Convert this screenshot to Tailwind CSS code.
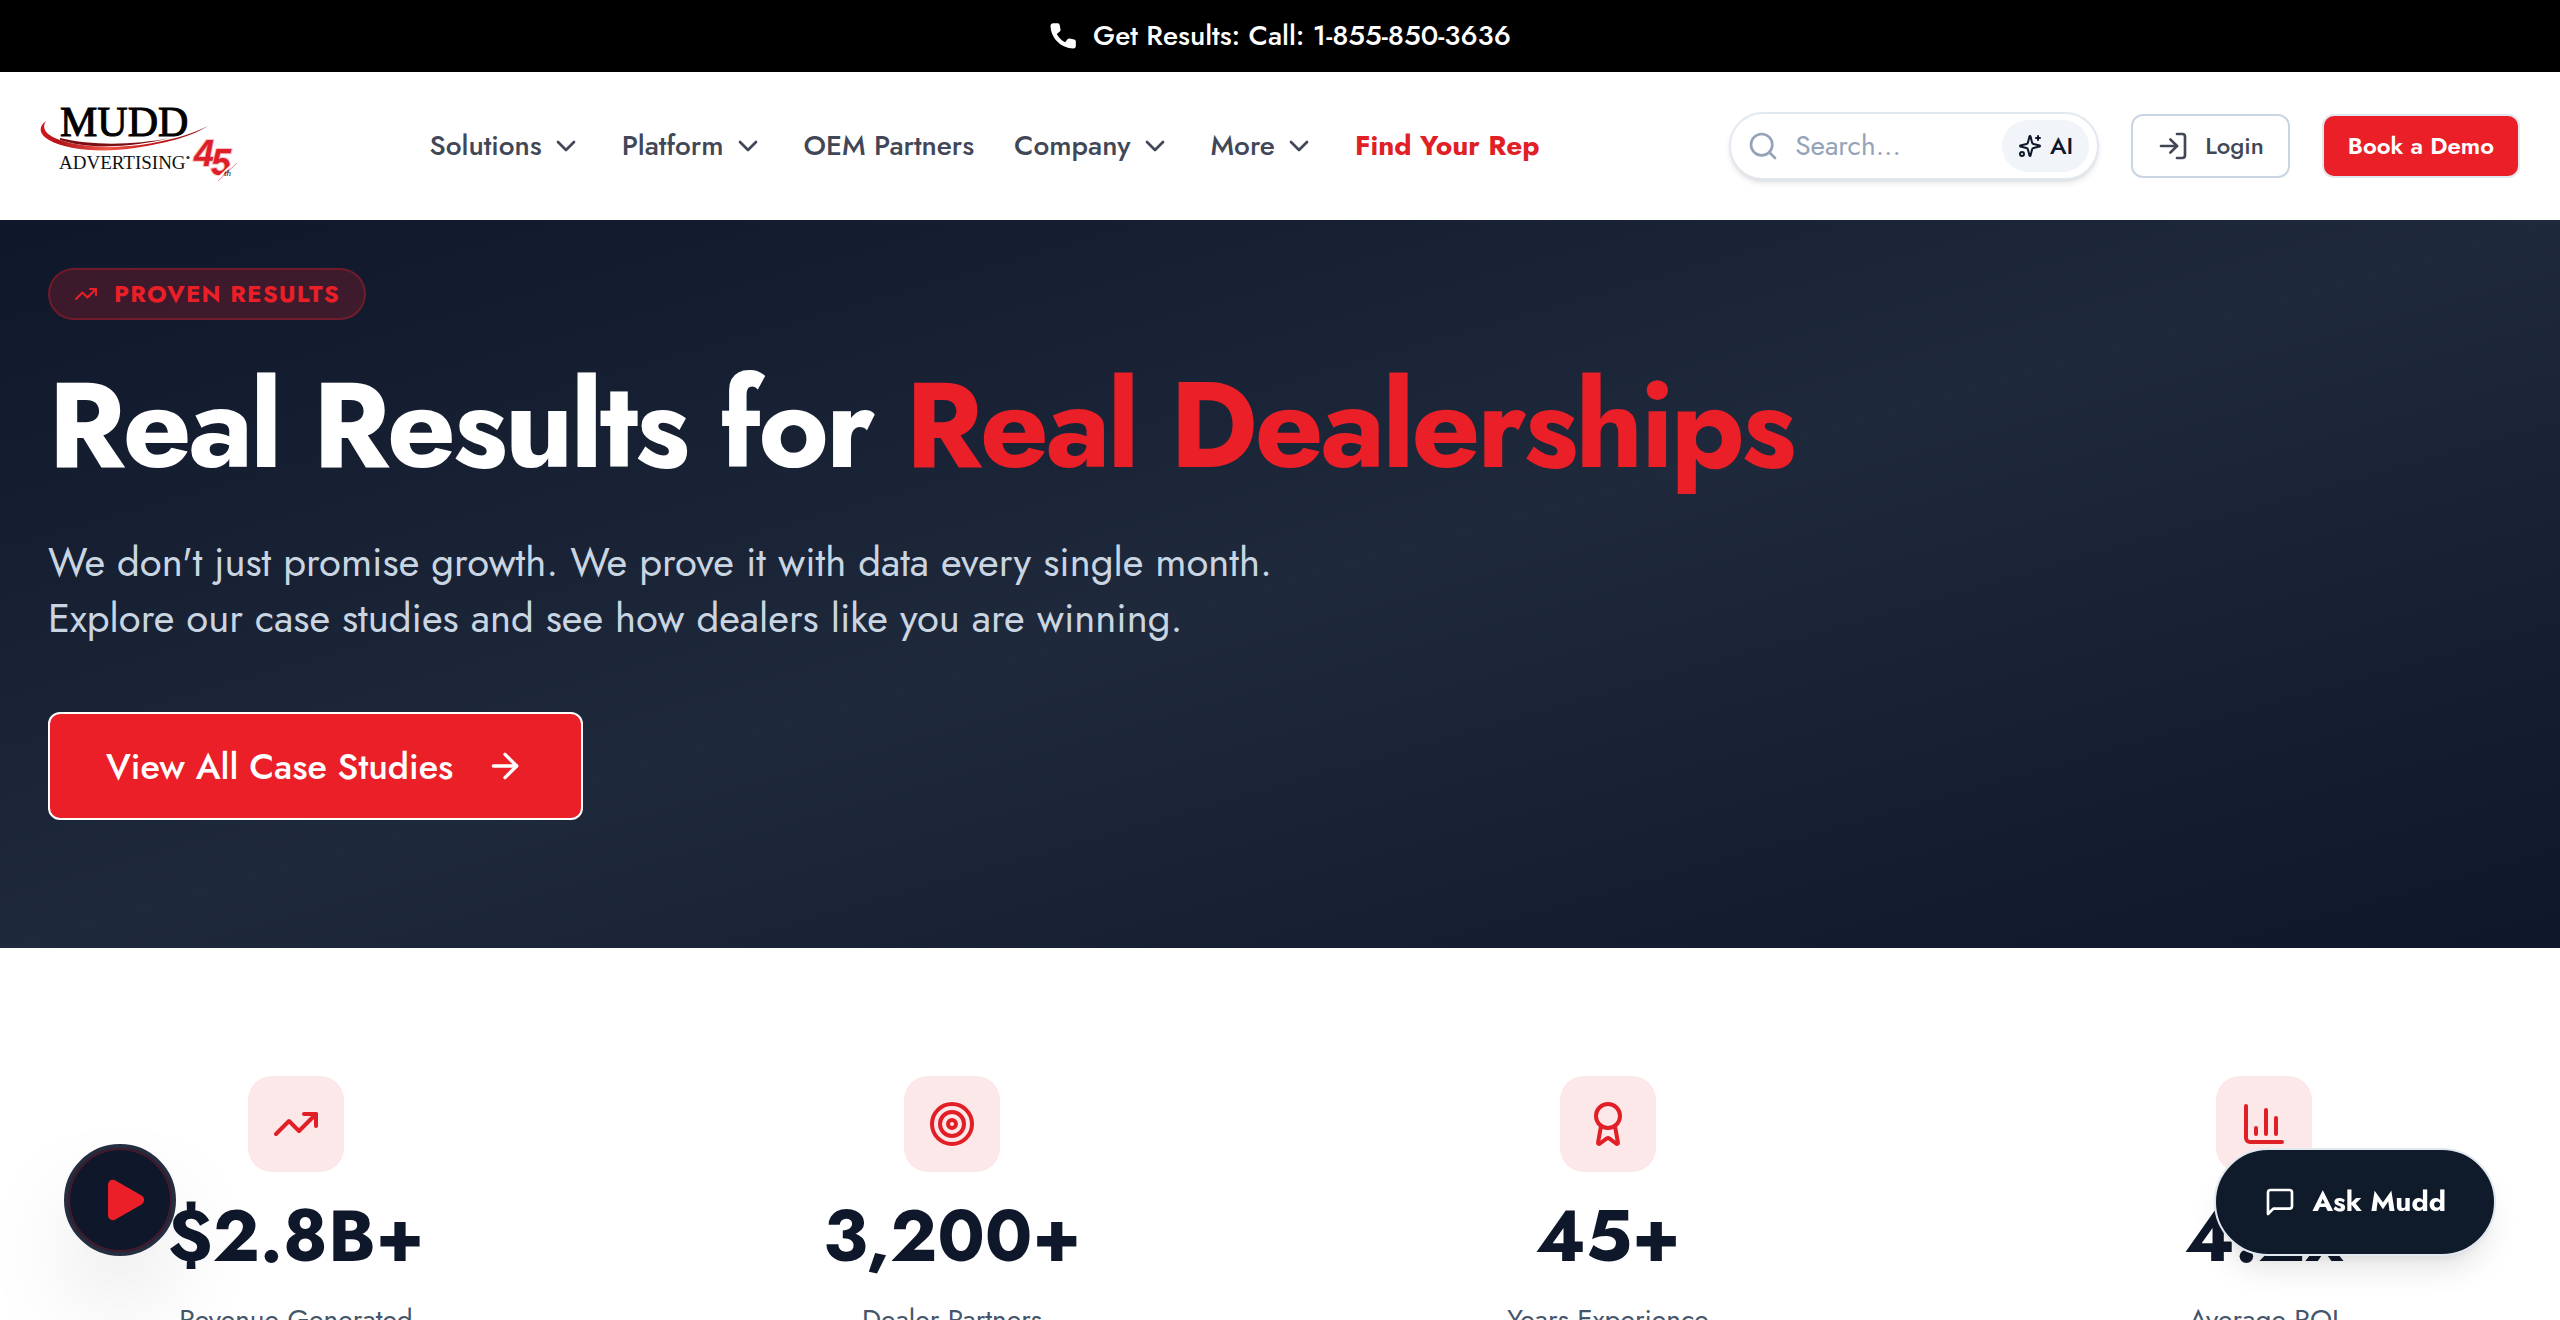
<!DOCTYPE html>
<html lang="en">
<head>
    <meta charset="UTF-8">
    <meta name="viewport" content="width=device-width, initial-scale=1.0">
    <title>Results | Mudd Advertising</title>
    <script src="https://cdn.jsdelivr.net/npm/@tailwindcss/browser@4"></script>
</head>
<body class="min-h-screen bg-white font-[Jost,Lato,sans-serif] text-[#0f172a]">

    <!-- Call bar -->
    <div class="bg-black">
        <a href="tel:1-855-850-3636" class="flex h-[72px] items-center justify-center gap-4 text-[28px] font-medium text-white">
            <svg class="size-7" viewBox="0 0 24 24" fill="currentColor"><path d="M3.500 1h3.800c.9 0 1.600.6 1.800 1.400l.8 4c.1.7-.1 1.300-.6 1.700L6.700 10.200c1.600 3.200 3.900 5.500 7.100 7.100l2.100-2.600c.4-.5 1.100-.8 1.700-.6l4 .8c.8.2 1.400.9 1.400 1.800v3.800c0 1.200-.9 2.200-2.100 2.200C10.300 22.700 1.300 13.700 1.300 3.100 1.300 1.900 2.300 1 3.500 1z"/></svg>
            Get Results: Call: 1-855-850-3636
        </a>
    </div>

    <!-- Header -->
    <header class="flex h-[148px] items-center justify-between bg-white px-10">
        <a href="#" aria-label="Mudd Advertising">
            <svg class="h-20 w-[200px]" viewBox="10 11 200 80">
                <defs>
                    <linearGradient id="swoosh" x1="0" x2="1" y1="0" y2="0">
                        <stop offset="0" stop-color="#d3151c"/>
                        <stop offset="0.12" stop-color="#b3161b"/>
                        <stop offset="0.4" stop-color="#f2574a"/>
                        <stop offset="0.65" stop-color="#c9191f"/>
                        <stop offset="1" stop-color="#8d1014"/>
                    </linearGradient>
                </defs>
                <text x="30" y="41" font-family="Liberation Serif, serif" font-size="42" fill="#000" stroke="#000" stroke-width="1">MUDD</text>
                <path d="M16 26C8 32 9 39 19 45C36 55 72 58 105 53C137 48 163 41 178 31C160 40 138 46 110 50C76 54 42 51 25 43C14 38 12 32 16 26Z" fill="url(#swoosh)"/>
                <path d="M30 45C60 55 105 52 140 43C105 50 62 51 30 43Z" fill="#7c0d11"/>
                <text x="29" y="74" font-family="Liberation Serif, serif" font-size="19" fill="#111">ADVERTISING</text>
                <circle cx="158" cy="62.500" r="1.600" fill="#333"/>
                <g font-family="Liberation Sans, sans-serif" font-weight="700" font-style="italic" font-size="36" fill="#dd1f29" stroke="#f6c4c6" stroke-width="2" paint-order="stroke">
                    <text x="164" y="71">4</text>
                    <text x="181" y="80">5</text>
                </g>
                <path d="M187 84L206 66" stroke="#fff" stroke-width="2"/>
                <path d="M188 86L207 68" stroke="#e0777b" stroke-width="0.800"/>
                <text x="194" y="81" font-family="Liberation Serif, serif" font-style="italic" font-size="9" fill="#222">th</text>
            </svg>
        </a>

        <nav class="flex items-center gap-10 text-[28px] font-medium text-[#414757]">
            <button class="flex items-center gap-2">Solutions
                <svg class="size-8" viewBox="0 0 24 24" fill="none" stroke="currentColor" stroke-width="2" stroke-linecap="round" stroke-linejoin="round"><path d="m6 9 6 6 6-6"/></svg>
            </button>
            <button class="flex items-center gap-2">Platform
                <svg class="size-8" viewBox="0 0 24 24" fill="none" stroke="currentColor" stroke-width="2" stroke-linecap="round" stroke-linejoin="round"><path d="m6 9 6 6 6-6"/></svg>
            </button>
            <a href="#">OEM Partners</a>
            <button class="flex items-center gap-2">Company
                <svg class="size-8" viewBox="0 0 24 24" fill="none" stroke="currentColor" stroke-width="2" stroke-linecap="round" stroke-linejoin="round"><path d="m6 9 6 6 6-6"/></svg>
            </button>
            <button class="flex items-center gap-2">More
                <svg class="size-8" viewBox="0 0 24 24" fill="none" stroke="currentColor" stroke-width="2" stroke-linecap="round" stroke-linejoin="round"><path d="m6 9 6 6 6-6"/></svg>
            </button>
            <a href="#" class="font-bold text-[#e01f27]">Find Your Rep</a>
        </nav>

        <div class="flex items-center gap-8">
            <form class="flex h-[68px] w-[370px] items-center rounded-full border-2 border-slate-200 bg-white pr-2 pl-4 shadow-md">
                <label for="search" aria-label="Search">
                    <svg class="size-8 text-[#94a3b8]" viewBox="0 0 24 24" fill="none" stroke="currentColor" stroke-width="2" stroke-linecap="round"><circle cx="11" cy="11" r="8"/><path d="m21 21-4.300-4.300"/></svg>
                </label>
                <input id="search" type="text" placeholder="Search..." class="min-w-0 flex-1 px-4 text-[28px] placeholder:text-[#94a3b8] focus:outline-none">
                <button type="button" class="flex h-[52px] items-center gap-2 rounded-full bg-slate-100 px-4 text-2xl font-medium">
                    <svg class="size-6" viewBox="0 0 24 24" fill="none" stroke="currentColor" stroke-width="2" stroke-linecap="round" stroke-linejoin="round"><path d="M9.937 15.500A2 2 0 0 0 8.500 14.063l-6.135-1.582a.5.5 0 0 1 0-.962L8.500 9.936A2 2 0 0 0 9.937 8.500l1.582-6.135a.5.5 0 0 1 .963 0L14.063 8.500A2 2 0 0 0 15.500 9.937l6.135 1.581a.5.5 0 0 1 0 .964L15.500 14.063a2 2 0 0 0-1.437 1.437l-1.582 6.135a.5.5 0 0 1-.963 0z"/><path d="M20 2v4"/><path d="M22 4h-4"/><circle cx="4" cy="20" r="2"/></svg>
                    AI
                </button>
            </form>
            <a href="#" class="flex h-16 items-center gap-4 rounded-xl border-2 border-slate-300 px-6 text-2xl font-medium text-[#414757]">
                <svg class="size-8" viewBox="0 0 24 24" fill="none" stroke="currentColor" stroke-width="2" stroke-linecap="round" stroke-linejoin="round"><path d="M15 3h4a2 2 0 0 1 2 2v14a2 2 0 0 1-2 2h-4"/><path d="m10 17 5-5-5-5"/><path d="M15 12H3"/></svg>
                Login
            </a>
            <a href="#" class="flex h-16 items-center rounded-xl border-2 border-slate-200 bg-[#eb1f27] px-6 text-2xl font-semibold text-white">Book a Demo</a>
        </div>
    </header>

    <!-- Hero -->
    <section class="flex min-h-[728px] flex-col items-start bg-linear-to-br from-[#0f172a] via-[#1e293b] to-[#0f172a] px-12 pt-12 pb-32">
        <div class="flex h-[52px] items-center gap-4 rounded-full border-2 border-[#eb1f27]/30 bg-[#eb1f27]/20 px-6 text-2xl font-bold tracking-wider text-[#eb1f27]">
            <svg class="size-6" viewBox="0 0 24 24" fill="none" stroke="currentColor" stroke-width="2" stroke-linecap="round" stroke-linejoin="round"><path d="M16 7h6v6"/><path d="m22 7-8.500 8.500-5-5L2 17"/></svg>
            PROVEN RESULTS
        </div>
        <h1 class="mt-[46px] text-[120px] leading-[120px] font-bold tracking-tight text-white">Real Results for <span class="text-[#eb1f27]">Real Dealerships</span></h1>
        <p class="mt-12 text-[40px] leading-[56px] text-slate-300">We don't just promise growth. We prove it with data every single month.<br>Explore our case studies and see how dealers like you are winning.</p>
        <a href="#" class="mt-[66px] flex h-[108px] items-center gap-8 rounded-xl border-2 border-white bg-[#eb1f27] px-14 text-4xl font-medium text-white">
            View All Case Studies
            <svg class="size-10" viewBox="0 0 24 24" fill="none" stroke="currentColor" stroke-width="2" stroke-linecap="round" stroke-linejoin="round"><path d="M5 12h14"/><path d="m12 5 7 7-7 7"/></svg>
        </a>
    </section>

    <!-- Stats -->
    <section class="grid grid-cols-4 gap-40 px-12 pt-32 text-center">
        <div class="flex flex-col items-center">
            <div class="flex size-24 items-center justify-center rounded-3xl bg-[#fde8e9] text-[#e01f27]">
                <svg class="size-12" viewBox="0 0 24 24" fill="none" stroke="currentColor" stroke-width="2" stroke-linecap="round" stroke-linejoin="round"><path d="M16 7h6v6"/><path d="m22 7-8.500 8.500-5-5L2 17"/></svg>
            </div>
            <div class="mt-6 text-7xl leading-20 font-bold">$2.8B+</div>
            <div class="mt-6 text-[28px] leading-10 text-slate-600">Revenue Generated</div>
        </div>
        <div class="flex flex-col items-center">
            <div class="flex size-24 items-center justify-center rounded-3xl bg-[#fde8e9] text-[#e01f27]">
                <svg class="size-12" viewBox="0 0 24 24" fill="none" stroke="currentColor" stroke-width="2"><circle cx="12" cy="12" r="10"/><circle cx="12" cy="12" r="6"/><circle cx="12" cy="12" r="2"/></svg>
            </div>
            <div class="mt-6 text-7xl leading-20 font-bold">3,200+</div>
            <div class="mt-6 text-[28px] leading-10 text-slate-600">Dealer Partners</div>
        </div>
        <div class="flex flex-col items-center">
            <div class="flex size-24 items-center justify-center rounded-3xl bg-[#fde8e9] text-[#e01f27]">
                <svg class="size-12" viewBox="0 0 24 24" fill="none" stroke="currentColor" stroke-width="2" stroke-linecap="round" stroke-linejoin="round"><path d="m15.477 12.890 1.515 8.526a.5.5 0 0 1-.81.470l-3.580-2.687a1 1 0 0 0-1.197 0l-3.586 2.686a.5.5 0 0 1-.81-.469l1.514-8.526"/><circle cx="12" cy="8" r="6"/></svg>
            </div>
            <div class="mt-6 text-7xl leading-20 font-bold">45+</div>
            <div class="mt-6 text-[28px] leading-10 text-slate-600">Years Experience</div>
        </div>
        <div class="flex flex-col items-center">
            <div class="flex size-24 items-center justify-center rounded-3xl bg-[#fde8e9] text-[#e01f27]">
                <svg class="size-12" viewBox="0 0 24 24" fill="none" stroke="currentColor" stroke-width="2" stroke-linecap="round" stroke-linejoin="round"><path d="M3 3v16a2 2 0 0 0 2 2h16"/><path d="M18 17V9"/><path d="M13 17V5"/><path d="M8 17v-3"/></svg>
            </div>
            <div class="mt-6 text-7xl leading-20 font-bold">4.2x</div>
            <div class="mt-6 text-[28px] leading-10 text-slate-600">Average ROI</div>
        </div>
    </section>

    <!-- Floating buttons -->
    <button aria-label="Play" class="fixed bottom-16 left-16 flex size-28 items-center justify-center rounded-full border-4 border-[#252d40] bg-[#0f172a] text-[#eb1f27] shadow-[0_50px_100px_-24px_rgba(0,0,0,0.25)] ring-2 ring-[#451a2b] ring-inset">
        <svg class="ml-2 size-12" viewBox="0 0 24 24" fill="currentColor"><path d="M4 4.500C4 2.400 6 1.300 7.700 2.300L20.800 9.800C22.500 10.800 22.500 13.200 20.800 14.200L7.700 21.700C6 22.700 4 21.600 4 19.500Z"/></svg>
    </button>
    <button class="fixed right-16 bottom-16 flex h-[108px] items-center gap-4 rounded-full border-2 border-slate-200 bg-[#0f1a2a] px-12 text-[28px] font-bold text-white shadow-[0_20px_30px_-6px_rgba(0,0,0,0.1),0_8px_12px_-8px_rgba(0,0,0,0.1)]">
        <svg class="size-8" viewBox="0 0 24 24" fill="none" stroke="currentColor" stroke-width="2" stroke-linecap="round" stroke-linejoin="round"><path d="M21 15a2 2 0 0 1-2 2H7l-4 4V5a2 2 0 0 1 2-2h14a2 2 0 0 1 2 2z"/></svg>
        Ask Mudd
    </button>
</body>
</html>
